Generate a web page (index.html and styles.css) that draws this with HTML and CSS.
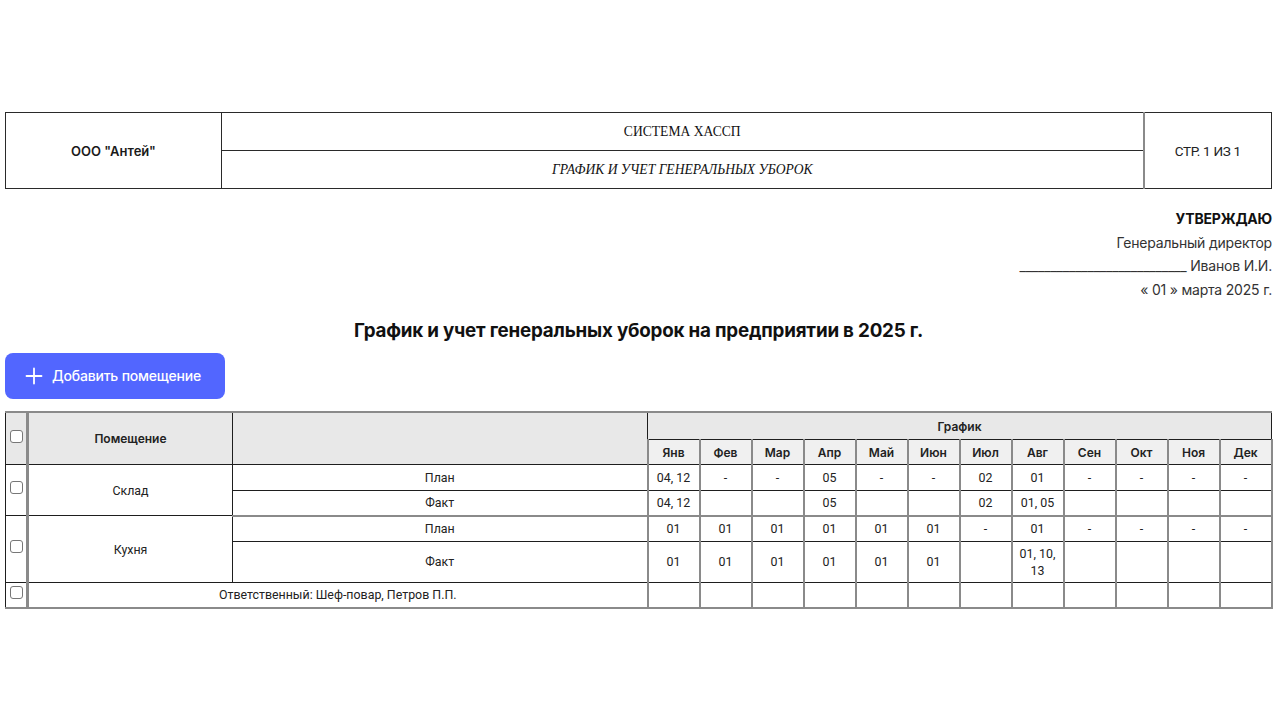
FILE: index.html
```html
<!DOCTYPE html>
<html lang="ru">
<head>
<meta charset="utf-8">
<title>График и учет генеральных уборок</title>
<link rel="stylesheet" href="styles.css">
</head>
<body>
<div class="page">
  <table class="doc-head">
    <tr>
      <td class="org" rowspan="2">ООО "Антей"</td>
      <td class="sys">СИСТЕМА ХАССП</td>
      <td class="pg" rowspan="2">СТР. 1 ИЗ 1</td>
    </tr>
    <tr>
      <td class="sys sub">ГРАФИК И УЧЕТ ГЕНЕРАЛЬНЫХ УБОРОК</td>
    </tr>
  </table>

  <div class="approve">
    <div class="approve-title">УТВЕРЖДАЮ</div>
    <div>Генеральный директор</div>
    <div>___________________________ Иванов И.И.</div>
    <div>« 01 » марта 2025 г.</div>
  </div>

  <h1 class="title">График и учет генеральных уборок на предприятии в 2025 г.</h1>

  <button class="add-btn" type="button">
    <svg width="18" height="18" viewBox="0 0 18 18" aria-hidden="true"><path d="M9 1.5v15M1.5 9h15" stroke="#fff" stroke-width="1.8" stroke-linecap="round"/></svg>
    <span>Добавить помещение</span>
  </button>

  <table class="grid">
    <colgroup>
      <col class="c-chk"><col class="c-room"><col class="c-kind">
      <col class="c-m"><col class="c-m"><col class="c-m"><col class="c-m"><col class="c-m"><col class="c-m">
      <col class="c-m"><col class="c-m"><col class="c-m"><col class="c-m"><col class="c-m"><col class="c-m">
    </colgroup>
    <thead>
      <tr>
        <th class="chk" rowspan="2"><span class="box"></span></th>
        <th class="room" rowspan="2">Помещение</th>
        <th class="kind" rowspan="2"></th>
        <th class="sched" colspan="12">График</th>
      </tr>
      <tr class="months">
        <th>Янв</th><th>Фев</th><th>Мар</th><th>Апр</th><th>Май</th><th>Июн</th>
        <th>Июл</th><th>Авг</th><th>Сен</th><th>Окт</th><th>Ноя</th><th>Дек</th>
      </tr>
    </thead>
    <tbody>
      <tr class="plan">
        <td class="chk" rowspan="2"><span class="box"></span></td>
        <td class="room" rowspan="2">Склад</td>
        <td class="kind">План</td>
        <td class="m">04, 12</td><td class="m">-</td><td class="m">-</td><td class="m">05</td><td class="m">-</td><td class="m">-</td>
        <td class="m">02</td><td class="m">01</td><td class="m">-</td><td class="m">-</td><td class="m">-</td><td class="m">-</td>
      </tr>
      <tr class="fact group-end">
        <td class="kind">Факт</td>
        <td class="m">04, 12</td><td class="m"></td><td class="m"></td><td class="m">05</td><td class="m"></td><td class="m"></td>
        <td class="m">02</td><td class="m">01, 05</td><td class="m"></td><td class="m"></td><td class="m"></td><td class="m"></td>
      </tr>
      <tr class="plan">
        <td class="chk" rowspan="2"><span class="box"></span></td>
        <td class="room" rowspan="2">Кухня</td>
        <td class="kind">План</td>
        <td class="m">01</td><td class="m">01</td><td class="m">01</td><td class="m">01</td><td class="m">01</td><td class="m">01</td>
        <td class="m">-</td><td class="m">01</td><td class="m">-</td><td class="m">-</td><td class="m">-</td><td class="m">-</td>
      </tr>
      <tr class="fact">
        <td class="kind">Факт</td>
        <td class="m">01</td><td class="m">01</td><td class="m">01</td><td class="m">01</td><td class="m">01</td><td class="m">01</td>
        <td class="m"></td><td class="m">01, 10, 13</td><td class="m"></td><td class="m"></td><td class="m"></td><td class="m"></td>
      </tr>
      <tr class="resp">
        <td class="chk"><span class="box"></span></td>
        <td class="resp-text" colspan="2">Ответственный: Шеф-повар, Петров П.П.</td>
        <td class="m"></td><td class="m"></td><td class="m"></td><td class="m"></td><td class="m"></td><td class="m"></td>
        <td class="m"></td><td class="m"></td><td class="m"></td><td class="m"></td><td class="m"></td><td class="m"></td>
      </tr>
    </tbody>
  </table>
</div>
</body>
</html>
```

FILE: styles.css
```css
* { box-sizing: border-box; }

html, body {
  margin: 0;
  padding: 0;
  background: #fff;
}

body {
  font-family: Inter, "Noto Sans", Roboto, sans-serif;
  color: #1a1a1a;
}

.page {
  padding: 112px 8px 0 5px;
  display: flex;
  flex-direction: column;
}

/* document header */
.doc-head {
  width: 100%;
  border-collapse: collapse;
  table-layout: fixed;
}
.doc-head td {
  border: 1px solid #2a2a2a;
  text-align: center;
  vertical-align: middle;
}
.doc-head .org {
  width: 216px;
  font-family: Inter, sans-serif;
  font-weight: 600;
  font-size: 13px;
}
.doc-head .sys {
  height: 38px;
  font-family: "Liberation Serif", serif;
  font-size: 13.6px;
  color: #111;
}
.doc-head .sub {
  font-style: italic;
}
.doc-head .pg {
  width: 128px;
  font-family: Roboto, sans-serif;
  font-size: 13.5px;
  letter-spacing: -0.3px;
  color: #222;
  border-left: 2px solid #8a8a8a;
}

/* approval block */
.approve {
  align-self: flex-end;
  margin-top: 18px;
  text-align: right;
  font-size: 14px;
  line-height: 23.7px;
  color: #333;
  letter-spacing: -0.2px;
}
.approve-title {
  font-weight: 700;
  color: #111;
}

.title {
  margin: 14px 0 0;
  text-align: center;
  font-size: 18.8px;
  font-weight: 700;
  line-height: 30px;
  color: #111;
  letter-spacing: -0.2px;
}

.add-btn {
  align-self: flex-start;
  margin-top: 7px;
  width: 220px;
  height: 46px;
  border: none;
  border-radius: 8px;
  background: #5266ff;
  color: #fff;
  display: flex;
  align-items: center;
  gap: 9px;
  padding: 0 0 0 20px;
  font-family: Inter, sans-serif;
  font-size: 14px;
  font-weight: 500;
  letter-spacing: -0.2px;
}

/* main grid */
.grid {
  margin-top: 12px;
  width: 100%;
  border-collapse: collapse;
  table-layout: fixed;
  font-family: Roboto, sans-serif;
  font-size: 12.4px;
  color: #222;
  border-top: 2px solid #8a8a8a;
  border-bottom: 2px solid #8a8a8a;
}
.c-chk { width: 22px; }
.c-room { width: 205px; }
.c-kind { width: 415px; }
.c-m { width: 52px; }

.grid th, .grid td {
  border: 1px solid #1e1e1e;
  text-align: center;
  vertical-align: middle;
  padding: 3px 6px;
  line-height: 17px;
}
.grid th {
  background: #e8e8e8;
  font-family: Inter, sans-serif;
  font-weight: 600;
  font-size: 12px;
  color: #222;
}
.grid .sched {
  height: 28px;
}
.grid .months th {
  height: 25px;
  background: #f0f0f0;
  border-left: 2px solid #8a8a8a;
  border-right: 2px solid #8a8a8a;
}
.grid td.m {
  border-left: 2px solid #8a8a8a;
  border-right: 2px solid #8a8a8a;
  height: 25.5px;
}
.grid .chk {
  padding: 0;
  border-right: 3px solid #8a8a8a;
  border-left: 1px solid #1e1e1e;
  vertical-align: middle;
}
.grid th.chk { background: #e8e8e8; }
.grid .box {
  display: block;
  width: 13px;
  height: 13px;
  margin: -6px auto 0 4px;
  border: 1px solid #777;
  border-radius: 3px;
  background: #fff;
}
.grid .resp .box,
.grid th.chk .box { margin-top: -4px; }
.grid .group-end td {
  border-bottom: 2px solid #8a8a8a;
}
.grid .resp-text {
  height: 25.5px;
}
```
